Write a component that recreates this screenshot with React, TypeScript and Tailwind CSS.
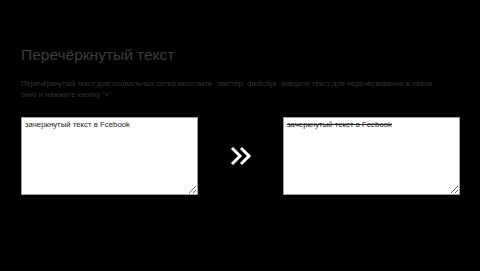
import { useState } from 'react';

export default function App() {
  const [text, setText] = useState('зачеркнутый текст в Fcebook');
  const [result, setResult] = useState('зачеркнутый текст в Fcebook');

  return (
    <div className="w-[480px] h-[271px] bg-black overflow-hidden" style={{ fontFamily: '"Liberation Sans", Arial, sans-serif' }}>
      <div className="pl-[21px] pt-[44px]">
        <h1 className="text-[15.5px] leading-[22px] text-[#3c3c3c] font-normal">Перечёркнутый текст</h1>
        <p className="mt-[12px] w-[415px] text-[7.5px] leading-[11px] text-[#333333]">
          Перечёркнутый текст для социальных сетей вконтакте, твиттер, фейсбук. Введите текст для перечёркивания в левое окно и нажмите кнопку "»"
        </p>
        <div className="mt-[17px] flex items-center">
          <textarea
            value={text}
            onChange={(e) => setText(e.target.value)}
            className="w-[177px] h-[78px] bg-white border border-[#a0a0a0] px-[3px] py-[1px] text-[7.8px] leading-[11px] text-[#222] outline-none resize"
          />
          <button onClick={() => setResult(text)} className="w-[85px] flex justify-center">
            <svg width="22" height="20" viewBox="0 0 22 20" fill="none" stroke="white" strokeWidth="3" strokeLinecap="butt" strokeLinejoin="miter">
              <path d="M2 2l8 8-8 8" />
              <path d="M11 2l8 8-8 8" />
            </svg>
          </button>
          <textarea
            readOnly
            value={result}
            className="w-[177px] h-[78px] bg-white border border-[#a0a0a0] px-[3px] py-[1px] text-[7.8px] leading-[11px] text-[#222] line-through outline-none"
          />
        </div>
      </div>
    </div>
  );
}
